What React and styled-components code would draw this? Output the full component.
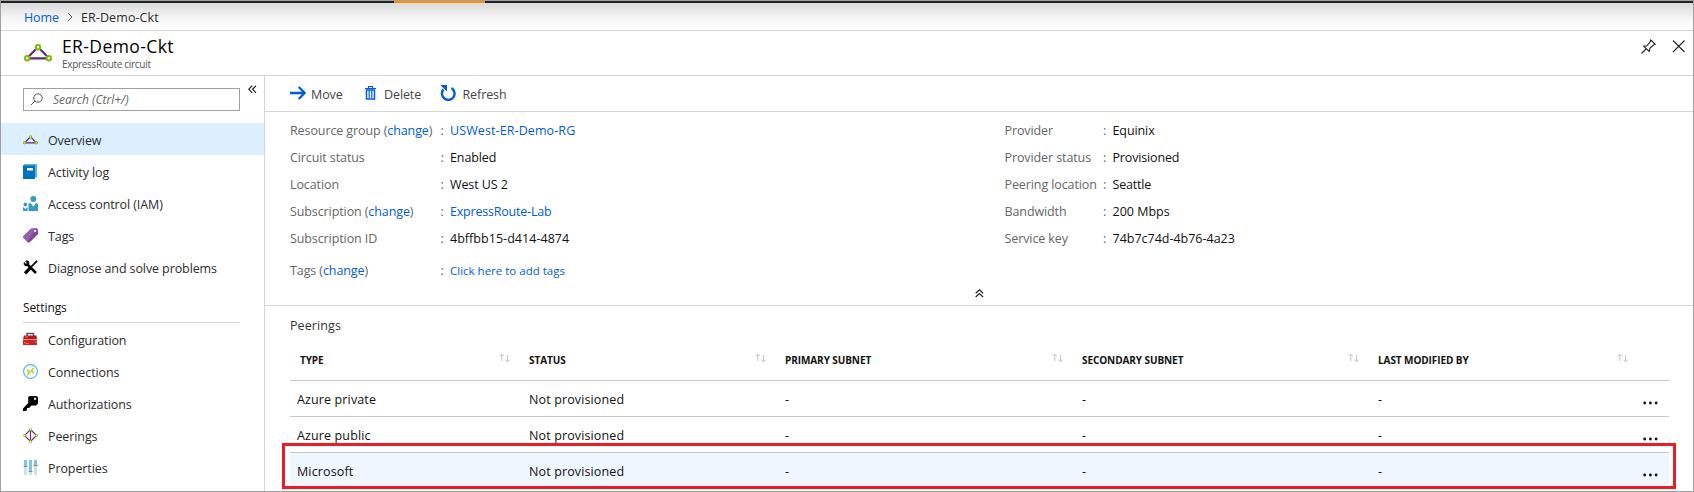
import React from 'react';
import styled, { createGlobalStyle } from 'styled-components';

const GlobalStyle = createGlobalStyle`
  * { box-sizing: border-box; }
  body { margin: 0; background: #fff; }
`;

const Frame = styled.div`
  position: relative;
  display: flex;
  flex-direction: column;
  width: 1694px;
  height: 492px;
  overflow: hidden;
  border: 1px solid #a0a0a0;
  background: #fff;
  color: #2c2c2c;
  font-family: 'Open Sans', 'Noto Sans', sans-serif;
  font-size: 12.5px;
  letter-spacing: -0.1px;
  white-space: nowrap;
`;
const TopBar = styled.div`
  flex: none;
  height: 2px;
  padding-left: 393px;
  background: #1f2321;
`;
const Loading = styled.div`
  width: 91px;
  height: 2px;
  background: #ff8c00;
`;
const Link = styled.a`
  color: #015cda;
`;
const Breadcrumb = styled.nav`
  display: flex;
  flex: none;
  align-items: center;
  height: 28px;
  padding: 1px 0 0 23px;
  border-bottom: 1px solid #d4d4d4;
  background: linear-gradient(#dadada, #f3f3f3 50%, #fff);
  svg { margin: 0 8px 0 8px; }
`;
const Current = styled.span`
  letter-spacing: 0.1px;
`;
const Header = styled.header`
  display: flex;
  flex: none;
  height: 45px;
  padding: 5px 7px 0 23px;
  border-bottom: 1px solid #d4d4d4;
`;
const HeaderIcon = styled.div`
  width: 38px;
  padding-top: 8px;
`;
const Titles = styled.div`
  flex: 1;
`;
const Title = styled.h1`
  margin: 0;
  color: #000;
  font-size: 17.5px;
  font-weight: 400;
  line-height: 20px;
  letter-spacing: 0.4px;
`;
const Subtitle = styled.div`
  padding-top: 1px;
  color: #555;
  font-size: 10px;
  line-height: 14px;
  letter-spacing: -0.3px;
`;
const WindowActions = styled.div`
  display: flex;
  gap: 16px;
  padding-top: 3px;
`;
const Body = styled.div`
  display: flex;
  flex: 1;
  min-height: 0;
`;
const Sidebar = styled.aside`
  flex: none;
  width: 264px;
  border-right: 1px solid #d4d4d4;
`;
const SearchRow = styled.div`
  display: flex;
  height: 47px;
  padding: 12px 0 0 22px;
  > svg { margin: -3px 0 0 8px; }
`;
const SearchBox = styled.div`
  display: flex;
  align-items: center;
  width: 217px;
  height: 23px;
  padding-left: 6px;
  gap: 10px;
  border: 1px solid #a0a0a0;
  color: #666;
  font-size: 12px;
  font-style: italic;
  letter-spacing: 0;
`;
const Item = styled.div`
  display: flex;
  align-items: center;
  height: 32px;
  padding: 2px 0 0 22px;
  gap: 10px;
  background: ${(p) => (p.$selected ? '#dbeffe' : 'transparent')};
  svg { flex: none; margin-top: -1px; }
`;
const Section = styled.div`
  height: 40px;
  margin-left: 22px;
  width: 217px;
  padding-top: 16px;
  border-bottom: 1px solid #d4d4d4;
  color: #111;
  line-height: 17px;
  font-size: 12px;
  font-weight: 500;
`;
const Main = styled.main`
  flex: 1;
  min-width: 0;
`;
const Toolbar = styled.div`
  display: flex;
  align-items: center;
  height: 36px;
  padding-left: 25px;
  border-bottom: 1px solid #d4d4d4;
`;
const Command = styled.div`
  display: flex;
  align-items: center;
  width: ${(p) => p.$w}px;
  gap: ${(p) => p.$gap}px;
  color: #444;
  span { padding-top: 2px; }
  svg { margin-top: -1px; }
`;
const Essentials = styled.section`
  display: flex;
  flex-direction: column;
  height: 194px;
  border-bottom: 1px solid #d4d4d4;
`;
const Columns = styled.div`
  display: flex;
  flex: 1;
  padding: 5px 0 0 25px;
`;
const Properties = styled.div`
  width: ${(p) => p.$w}px;
`;
const Property = styled.div`
  display: grid;
  grid-template-columns: ${(p) => p.$label}px 9.5px auto;
  align-items: center;
  height: 27px;
  margin-top: ${(p) => p.$offset || 0}px;
  color: #666;
`;
const Value = styled.span`
  color: #111;
  font-size: ${(p) => p.$size || 12.5}px;
  letter-spacing: ${(p) => (p.$track ?? -0.1)}px;
`;
const Collapse = styled.div`
  height: 16px;
  padding-left: 710px;
  line-height: 0;
`;
const TableTitle = styled.h2`
  margin: 9px 0 0 25px;
  height: 22px;
  color: #333;
  font-size: 12.5px;
  font-weight: 400;
  line-height: 22px;
  letter-spacing: 0.1px;
`;
const Table = styled.div`
  width: 1379px;
  margin-left: 25px;
`;
const Row = styled.div`
  display: grid;
  grid-template-columns: 239px 256px 297px 296px 265px 26px;
  align-items: center;
  height: 36px;
  padding-top: 1px;
  border-top: 1px solid #c8c8c8;
  background: ${(p) => (p.$selected ? '#eef6ff' : 'transparent')};
  color: #111;
  font-weight: 500;
  letter-spacing: 0.13px;
  svg { margin: 7px 0 0 -0.5px; }
  > :first-child { padding-left: 7px; }
`;
const HeadRow = styled(Row)`
  height: 43px;
  padding-top: 2px;
  border-top: 0;
  font-size: 10px;
  font-weight: 700;
  > :first-child { padding-left: 10px; }
`;
const HeadCell = styled.div`
  display: flex;
  align-items: center;
  justify-content: space-between;
  padding-right: ${(p) => p.$pad}px;
  letter-spacing: -0.08px;
  svg { margin-top: -3px; }
`;
const Highlight = styled.div`
  position: absolute;
  top: 442px;
  left: 281px;
  width: 1394px;
  height: 46px;
  border: 3px solid #ed1c24;
`;

const Circuit = ({ w, h }) => (
  <svg width={w} height={h} viewBox="0 0 28 18" fill="none">
    <path d="M14 3 L3 14.3 H25 Z" stroke="#68217a" strokeWidth="2.2" />
    {[[14, 3.3], [3.2, 14.2], [24.8, 14.2]].map(([x, y]) => (
      <circle key={x} cx={x} cy={y} r="2.2" fill="#fff" stroke="#7fba00" strokeWidth="2" />
    ))}
  </svg>
);
const icons = {
  overview: <Circuit w={15} h={10} />,
  log: (
    <svg width="15" height="15"><path d="M2 0H14V13.5H2Z" fill="#59b4d9" /><path d="M0 1.5L2 0V13L0 15Z" fill="#3999c6" /><path d="M0 1.5H12V15H0Z" fill="#0072c6" /><path d="M4 4H10V6.5H4Z" fill="#fff" /></svg>
  ),
  iam: (
    <svg width="15" height="15" fill="#3999c6"><circle cx="10.3" cy="3" r="3" /><path d="M5.5 15V8.5Q5.5 7 7.5 7L10.3 10.5L13 7Q15 7 15 8.5V15Z" /><circle cx="2.4" cy="8.5" r="1.9" /><path d="M0 15V11L2.4 13L4.6 11V15Z" /></svg>
  ),
  tag: (
    <svg width="15" height="15"><path d="M0 8.5L8 0.8L13.5 0L15 1.5V6.2L6.5 14.5Q5.5 15 4.5 14L0.3 9.7Z" fill="#804998" /><path d="M0 8.5L8 .8 13.5 0 4 13.5Z" fill="#9460aa" /><circle cx="12.2" cy="2.9" r="1.1" fill="#fff" /></svg>
  ),
  tools: (
    <svg width="15" height="15" fill="none" stroke="#000"><path d="M4 4L13 13" strokeWidth="2.5" /><path d="M1 2.5L3 4.2L4.2 3L2.6 1C5.2.2 6.5 2 5.8 4.1L4.4 5.7C2.2 6.4.6 5 1 2.5Z" fill="#000" strokeWidth=".6" /><path d="M14 .8L8 7" strokeWidth="1.7" /><path d="M7.3 8L2 13.3" strokeWidth="3.2" /></svg>
  ),
  config: (
    <svg width="15" height="15"><path d="M4 4V1.5H10.5V4" fill="none" stroke="#555" strokeWidth="1.5" /><path d="M1 3.5H13.5L14 7H0Z" fill="#ba141a" /><path d="M0 8H14V13H0Z" fill="#d02026" /><path d="M0 7H14V8H0Z" fill="#eb9b91" /><path d="M1 10.5L6 12M2 5H5" stroke="#f58220" /><path d="M12 9H14V11H12Z" fill="#6878bd" /></svg>
  ),
  connections: (
    <svg width="15" height="15"><circle cx="7.5" cy="7.5" r="6.9" fill="#fff" stroke="#59b4d9" strokeWidth="1.2" /><path d="M4 5.6L6.8 8L4.2 11.2M10.8 3.8L8.3 6.8L11.2 9.2" fill="none" stroke="#b8d432" strokeWidth="1.7" /></svg>
  ),
  key: (
    <svg width="15" height="15"><path fillRule="evenodd" d="M6.5 0H13Q15 0 15 2V7.5L13 9.5H8.5L6 12H4V14L3 15H0V12.5L5.2 7V1.3ZM11 1.8V3.8H13.2V1.8Z" fill="#000" /></svg>
  ),
  peerings: (
    <svg width="15" height="15" fill="none"><path d="M7.5 1.5L13.5 7.5L7.5 13.5L1.5 7.5ZM7.5 1.5V13.5" stroke="#68217a" strokeWidth="1.1" />{[[7.5, 1.6], [13.4, 7.5], [7.5, 13.4], [1.6, 7.5]].map(([x, y]) => <circle key={`${x}-${y}`} cx={x} cy={y} r="1.1" fill="#fff" stroke="#7fba00" strokeWidth="1" />)}</svg>
  ),
  properties: (
    <svg width="15" height="15">{[[1, 6], [6, 11], [11, 5]].map(([x, y]) => <g key={x}><path d={`M${x} 0h3v${y}h-3z`} fill="#7cc4e2" /><path d={`M${x} ${y}h3V15h-3z`} fill="#c3e3f1" /><path d={`M${x - 0.5} ${y}h4v1h-4z`} fill="#888" /></g>)}</svg>
  ),
};
const Sort = () => (
  <svg width="12" height="10" fill="none" stroke="#c4c4c4"><path d="M2.8 8V1M.5 3.3L2.8 1 5.1 3.3M8.6 2V9M6.3 6.7L8.6 9 10.9 6.7" /></svg>
);
const Dots = () => (
  <svg width="16" height="4" fill="#111"><circle cx="1.7" cy="2" r="1.4" /><circle cx="7.4" cy="2" r="1.4" /><circle cx="13.1" cy="2" r="1.4" /></svg>
);

const general = [['overview', 'Overview'], ['log', 'Activity log'], ['iam', 'Access control (IAM)'], ['tag', 'Tags'], ['tools', 'Diagnose and solve problems']];
const settings = [['config', 'Configuration'], ['connections', 'Connections'], ['key', 'Authorizations'], ['peerings', 'Peerings'], ['properties', 'Properties']];
const columns = [['TYPE', 18], ['STATUS', 18], ['PRIMARY SUBNET', 18], ['SECONDARY SUBNET', 18], ['LAST MODIFIED BY', 14]];
const peerings = ['Azure private', 'Azure public', 'Microsoft'];
const left = [
  { label: 'Resource group', change: true, value: 'USWest-ER-Demo-RG', link: true, track: 0.1 },
  { label: 'Circuit status', value: 'Enabled' },
  { label: 'Location', value: 'West US 2' },
  { label: 'Subscription', change: true, value: 'ExpressRoute-Lab', link: true, track: -0.2 },
  { label: 'Subscription ID', value: '4bffbb15-d414-4874', track: 0.04 },
  { label: 'Tags', change: true, value: 'Click here to add tags', link: true, offset: 5, size: 11.5, track: 0 },
];
const right = [
  { label: 'Provider', value: 'Equinix' },
  { label: 'Provider status', value: 'Provisioned', track: -0.15 },
  { label: 'Peering location', value: 'Seattle', track: -0.2 },
  { label: 'Bandwidth', value: '200 Mbps', track: 0 },
  { label: 'Service key', value: '74b7c74d-4b76-4a23', track: -0.01 },
];

const PropertyList = ({ items, width, label }) => (
  <Properties $w={width}>
    {items.map((p) => (
      <Property key={p.label} $label={label} $offset={p.offset}>
        <span>{p.label}{p.change && <> (<Link>change</Link>)</>}</span>
        <span>:</span>
        <Value $size={p.size} $track={p.track}>{p.link ? <Link>{p.value}</Link> : p.value}</Value>
      </Property>
    ))}
  </Properties>
);

export default function App() {
  return (
    <Frame>
      <GlobalStyle />
      <TopBar><Loading /></TopBar>
      <Breadcrumb>
        <Link>Home</Link>
        <svg width="6" height="10" fill="none" stroke="#555"><path d="M1 1L5 5L1 9" /></svg>
        <Current>ER-Demo-Ckt</Current>
      </Breadcrumb>
      <Header>
        <HeaderIcon><Circuit w={28} h={18} /></HeaderIcon>
        <Titles>
          <Title>ER-Demo-Ckt</Title>
          <Subtitle>ExpressRoute circuit</Subtitle>
        </Titles>
        <WindowActions>
          <svg width="15" height="15" fill="none" stroke="#222" strokeWidth="1.1"><path d="M.5 14.5L5 10M2.6 7.2L8.2 12.4L9 9L12.5 6L14.2 5.3L9.8 1L9 3.2L5.8 6.8Z" /></svg>
          <svg width="14" height="14" fill="none" stroke="#222" strokeWidth="1.1"><path d="M1 1.5L12.5 13M12.5 1.5L1 13" /></svg>
        </WindowActions>
      </Header>
      <Body>
        <Sidebar>
          <SearchRow>
            <SearchBox>
              <svg width="13" height="13" fill="none" stroke="#555"><circle cx="8" cy="5" r="4.2" /><path d="M5 8L.7 12.3" /></svg>
              Search (Ctrl+/)
            </SearchBox>
            <svg width="9" height="9" fill="none" stroke="#222" strokeWidth="1.2"><path d="M4.2 .7L.8 4.3L4.2 7.9M8 .7L4.6 4.3L8 7.9" /></svg>
          </SearchRow>
          {general.map(([icon, text], i) => <Item key={text} $selected={i === 0}>{icons[icon]}{text}</Item>)}
          <Section>Settings</Section>
          {settings.map(([icon, text]) => <Item key={text}>{icons[icon]}{text}</Item>)}
        </Sidebar>
        <Main>
          <Toolbar>
            <Command $w={75} $gap={5}>
              <svg width="16" height="14" fill="none" stroke="#015cda" strokeWidth="2.3"><path d="M0 7H14.5M8.7 1L14.7 7L8.7 13" /></svg>
              <span>Move</span>
            </Command>
            <Command $w={75} $gap={8}>
              <svg width="11" height="14" fill="none" stroke="#015cda"><path d="M0 2.5H11M3.5 2V.5H7.5V2" strokeWidth="1.2" /><path d="M1.5 4V13H9.5V4Z" strokeWidth="1.5" /><path d="M4.2 4V12M6.8 4V12" strokeWidth="1.2" /></svg>
              <span>Delete</span>
            </Command>
            <Command $w={76} $gap={6.5}>
              <svg width="16" height="17" fill="none" stroke="#015cda" strokeWidth="2.4"><path d="M11.4 3.1A6.3 6.3 0 1 1 3.5 4.4" /><path d="M.3 0H7V6.6Z" fill="#015cda" stroke="none" /></svg>
              <span>Refresh</span>
            </Command>
          </Toolbar>
          <Essentials>
            <Columns>
              <PropertyList items={left} width={714.5} label={150.5} />
              <PropertyList items={right} width={400} label={98.5} />
            </Columns>
            <Collapse><svg width="9" height="9" fill="none" stroke="#222" strokeWidth="1.2"><path d="M.7 4.2L4.4 .8L8.1 4.2M.7 8L4.4 4.6L8.1 8" /></svg></Collapse>
          </Essentials>
          <TableTitle>Peerings</TableTitle>
          <Table>
            <HeadRow>
              {columns.map(([text, pad]) => <HeadCell key={text} $pad={pad}>{text}<Sort /></HeadCell>)}
            </HeadRow>
            {peerings.map((name, i) => (
              <Row key={name} $selected={i === 2}>
                <span>{name}</span><span>Not provisioned</span><span>-</span><span>-</span><span>-</span><Dots />
              </Row>
            ))}
          </Table>
        </Main>
      </Body>
      <Highlight />
    </Frame>
  );
}
